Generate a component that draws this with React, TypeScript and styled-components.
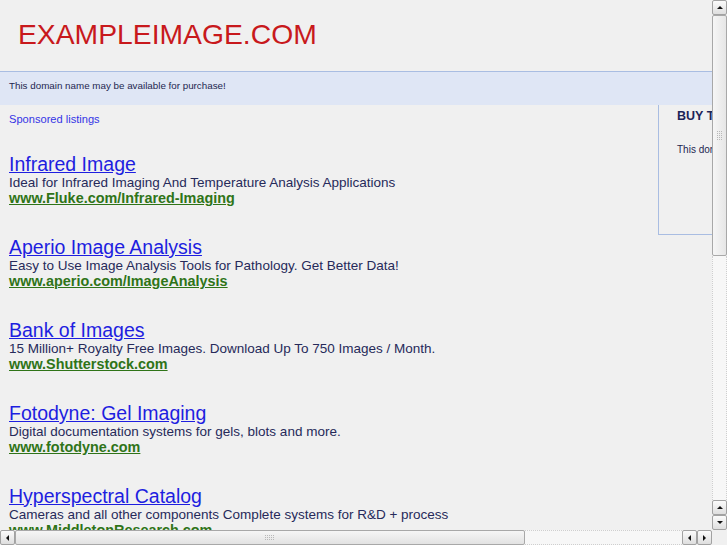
import React from "react";
import styled, { createGlobalStyle } from "styled-components";

const ads = [
  {
    title: "Infrared Image",
    text: "Ideal for Infrared Imaging And Temperature Analysis Applications",
    url: "www.Fluke.com/Infrared-Imaging",
  },
  {
    title: "Aperio Image Analysis",
    text: "Easy to Use Image Analysis Tools for Pathology. Get Better Data!",
    url: "www.aperio.com/ImageAnalysis",
  },
  {
    title: "Bank of Images",
    text: "15 Million+ Royalty Free Images. Download Up To 750 Images / Month.",
    url: "www.Shutterstock.com",
  },
  {
    title: "Fotodyne: Gel Imaging",
    text: "Digital documentation systems for gels, blots and more.",
    url: "www.fotodyne.com",
  },
  {
    title: "Hyperspectral Catalog",
    text: "Cameras and all other components Complete systems for R&D + process",
    url: "www.MiddletonResearch.com",
  },
];

type Dir = "up" | "down" | "left" | "right";

function Arrow({ dir }: { dir: Dir }) {
  const pts: Record<Dir, string> = {
    up: "1,5 4,2 7,5",
    down: "1,2 4,5 7,2",
    left: "5,1 2,4 5,7",
    right: "2,1 5,4 2,7",
  };
  return (
    <svg width="7" height="7" viewBox="0 0 7 7">
      <polygon points={pts[dir]} fill="#111" />
    </svg>
  );
}

function Grip({ vertical }: { vertical?: boolean }) {
  const cols = vertical ? 3 : 5;
  const rows = vertical ? 5 : 3;
  const dots = [];
  for (let r = 0; r < rows; r++)
    for (let c = 0; c < cols; c++)
      dots.push(<rect key={`${r}-${c}`} x={c * 2} y={r * 2} width="1" height="1" fill="#b8b8b8" />);
  return (
    <svg width={cols * 2} height={rows * 2}>
      {dots}
    </svg>
  );
}

export default function App() {
  return (
    <>
      <GlobalStyle />
      <Window>
        <Viewport>
          <Page>
            <Header>
              <SiteName>EXAMPLEIMAGE.COM</SiteName>
            </Header>
            <Band>This domain name may be available for purchase!</Band>
            <Content>
              <Listings>
                <Sponsored>Sponsored listings</Sponsored>
                {ads.map((ad) => (
                  <Ad key={ad.title}>
                    <AdTitle href="#">{ad.title}</AdTitle>
                    <AdText>{ad.text}</AdText>
                    <AdUrl href="#">{ad.url}</AdUrl>
                  </Ad>
                ))}
              </Listings>
              <BuyBox>
                <BuyTitle>BUY THIS DOMAIN</BuyTitle>
                <BuyText>This domain may be for sale. Inquire now.</BuyText>
              </BuyBox>
            </Content>
          </Page>
        </Viewport>

        <VScroll>
          <ArrowButton>
            <Arrow dir="up" />
          </ArrowButton>
          <VThumb>
            <Grip vertical />
          </VThumb>
          <VTrack />
          <ArrowButton>
            <Arrow dir="up" />
          </ArrowButton>
          <ArrowButton>
            <Arrow dir="down" />
          </ArrowButton>
        </VScroll>

        <HScroll>
          <ArrowButton>
            <Arrow dir="left" />
          </ArrowButton>
          <HThumb>
            <Grip />
          </HThumb>
          <HTrack />
          <ArrowButton>
            <Arrow dir="left" />
          </ArrowButton>
          <ArrowButton>
            <Arrow dir="right" />
          </ArrowButton>
        </HScroll>
        <Corner />
      </Window>
    </>
  );
}

const GlobalStyle = createGlobalStyle`
  html, body {
    margin: 0;
    padding: 0;
    background: #f0f0f0;
  }
`;

const Window = styled.div`
  width: 727px;
  height: 545px;
  display: grid;
  grid-template-columns: 712px 15px;
  grid-template-rows: 530px 15px;
  overflow: hidden;
  background: #f0f0f0;
  font-family: "Liberation Sans", Arial, sans-serif;
`;

const Viewport = styled.div`
  overflow: hidden;
`;

const Page = styled.div`
  width: 973px;
`;

const Header = styled.div`
  height: 72px;
  box-sizing: border-box;
  padding: 19px 18px 0;
  border-bottom: 1px solid #a9bde2;
`;

const SiteName = styled.div`
  font-size: 28.3px;
  line-height: 31px;
  color: #c8191c;
`;

const Band = styled.div`
  height: 33px;
  box-sizing: border-box;
  padding: 8px 9px 0;
  background: #dfe6f5;
  font-size: 9.8px;
  line-height: 12px;
  color: #1e2650;
`;

const Content = styled.div`
  display: flex;
  align-items: flex-start;
`;

const Listings = styled.div`
  width: 658px;
  box-sizing: border-box;
  padding: 8px 9px 0;
`;

const Sponsored = styled.div`
  font-size: 11.1px;
  line-height: 13px;
  color: #3434e6;
  margin-bottom: 27px;
`;

const Ad = styled.div`
  display: flex;
  flex-direction: column;
  align-items: flex-start;
  margin-bottom: 29px;
`;

const AdTitle = styled.a`
  font-size: 19.5px;
  line-height: 22px;
  color: #1e1ee0;
  text-decoration: underline;
`;

const AdText = styled.div`
  font-size: 13.5px;
  line-height: 15px;
  color: #262a5a;
  white-space: nowrap;
`;

const AdUrl = styled.a`
  font-size: 14.4px;
  line-height: 17px;
  font-weight: bold;
  color: #2f7418;
  text-decoration: underline;
`;

const BuyBox = styled.div`
  width: 300px;
  height: 130px;
  box-sizing: border-box;
  padding: 4px 18px 0;
  border-left: 1px solid #a9bde2;
  border-bottom: 1px solid #a9bde2;
`;

const BuyTitle = styled.div`
  font-size: 12.5px;
  line-height: 14px;
  font-weight: bold;
  color: #1c2458;
  white-space: nowrap;
`;

const BuyText = styled.div`
  margin-top: 21px;
  font-size: 10px;
  line-height: 12px;
  color: #1e2650;
  white-space: nowrap;
`;

const VScroll = styled.div`
  display: flex;
  flex-direction: column;
  background: #f0f0f0;
`;

const HScroll = styled.div`
  display: flex;
  background: #f0f0f0;
`;

const Corner = styled.div`
  background: #f0f0f0;
`;

const ArrowButton = styled.div`
  flex: 0 0 15px;
  width: 15px;
  height: 15px;
  box-sizing: border-box;
  display: flex;
  align-items: center;
  justify-content: center;
  border: 1px solid #a2a2a2;
  border-radius: 2px;
  background: linear-gradient(#fbfbfb, #dedede);
`;

const VThumb = styled.div`
  flex: 0 0 241px;
  box-sizing: border-box;
  border: 1px solid #a8a8a8;
  border-radius: 2px;
  background: linear-gradient(90deg, #f6f6f6, #e6e6e6);
  display: flex;
  align-items: center;
  justify-content: center;
`;

const VTrack = styled.div`
  flex: 1;
  box-sizing: border-box;
  border-left: 1px dotted #cfcfcf;
  border-right: 1px dotted #cfcfcf;
  background: #f7f7f7;
`;

const HThumb = styled.div`
  flex: 0 0 510px;
  box-sizing: border-box;
  border: 1px solid #a8a8a8;
  border-radius: 2px;
  background: linear-gradient(#f6f6f6, #e2e2e2);
  display: flex;
  align-items: center;
  justify-content: center;
`;

const HTrack = styled.div`
  flex: 1;
  box-sizing: border-box;
  border-top: 1px dotted #cfcfcf;
  border-bottom: 1px dotted #cfcfcf;
  background: #f7f7f7;
`;
